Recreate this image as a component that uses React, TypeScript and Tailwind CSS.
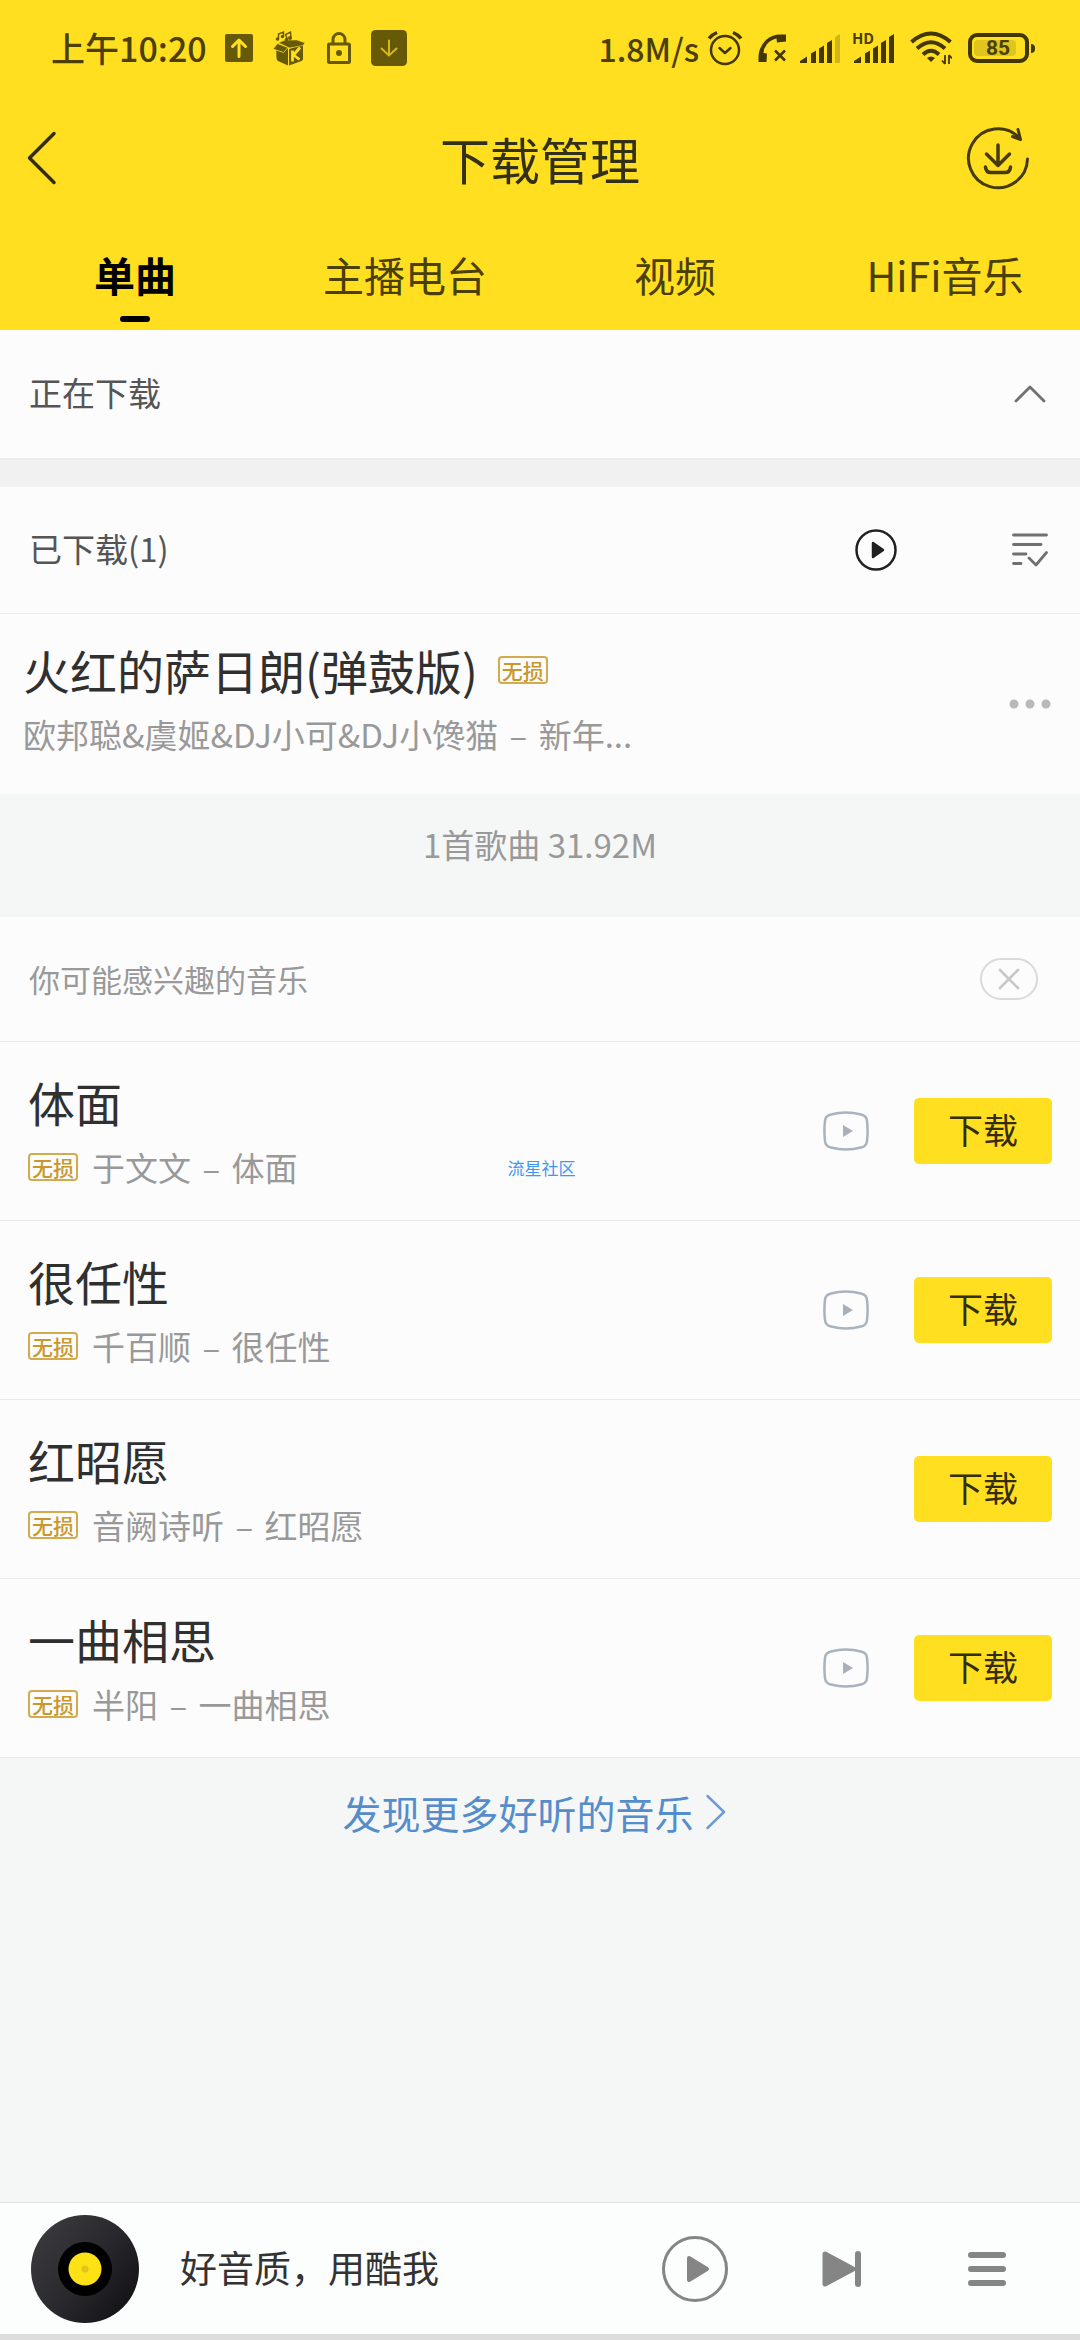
import React from "react";

type Song = { title: string; artist: string; album: string; hasVideo: boolean; mark?: string };

const songs: Song[] = [
  { title: "体面", artist: "于文文", album: "体面", hasVideo: true, mark: "流星社区" },
  { title: "很任性", artist: "千百顺", album: "很任性", hasVideo: true },
  { title: "红昭愿", artist: "音阙诗听", album: "红昭愿", hasVideo: false },
  { title: "一曲相思", artist: "半阳", album: "一曲相思", hasVideo: true },
];

const tabs = ["单曲", "主播电台", "视频", "HiFi音乐"];

function Lossless() {
  return (
    <span className="flex h-7 w-[50px] shrink-0 items-center justify-center rounded border-2 border-[#d3ab4e] text-[21px] leading-6 font-medium text-[#c9972b]">
      无损
    </span>
  );
}

function Credit({ artist, album }: { artist: string; album: string }) {
  return (
    <span>
      {artist} <span className="mx-1">–</span> {album}
    </span>
  );
}

function SignalBars({ faded }: { faded: boolean }) {
  return (
    <svg className="h-[29px] w-10" viewBox="0 0 40 29" fill="#433700" aria-hidden="true">
      <path d="M0 29v-2l7-4.500v6.500z" />
      <path d="M11 19.500l5-3V29h-5z" />
      <path d="M19 14.500l5-3V29h-5z" />
      <path d="M27 9l5-3V29h-5z" />
      <path d="M35 3l5-3V29h-5z" opacity={faded ? 0.25 : 1} />
    </svg>
  );
}

function StatusBar() {
  return (
    <div className="flex h-24 items-center justify-between pr-[45px] pl-[51px] text-[#4b3f02]">
      <div className="flex items-center">
        <span className="text-[34px] leading-10 font-medium">上午10:20</span>
        <svg className="ml-[18px] h-7 w-7" viewBox="0 0 28 28" aria-hidden="true">
          <rect width="28" height="28" rx="2" fill="#665908" />
          <path d="M14 22.500V6.500M7.500 12.500L14 6l6.500 6.500" fill="none" stroke="#ffe022" strokeWidth="3" strokeLinecap="round" strokeLinejoin="round" />
        </svg>
        <svg className="ml-[19px] h-9 w-[34px]" viewBox="0 0 34 36" aria-hidden="true">
          <path d="M4 15L16 18.500V35.500L6 31Q4.500 30 4.500 28z" fill="#665908" />
          <path d="M17 19L31 14.500V29Q31 30.500 29.500 31L17 35.500z" fill="#665908" />
          <path d="M1 19L5.500 13.500L16 17.500L11.500 22.500z" fill="#665908" stroke="#ffdf20" strokeWidth="0.8" />
          <path d="M6.500 12.800L13 10h12l8 2.800L31 15.500L17.500 18z" fill="#665908" stroke="#ffdf20" strokeWidth="0.6" />
          <path d="M20.500 20.500V31.500M28 17.500L21.500 25L27.500 29.500" fill="none" stroke="#ffdf20" strokeWidth="2.800" strokeLinejoin="round" />
          <path d="M6.500 9V4L11.500 2V6M15.500 9.500L13.500 4.500L18.500 2L19 8" fill="none" stroke="#665908" strokeWidth="1.400" />
          <circle cx="5.500" cy="9" r="1.800" fill="#665908" />
          <circle cx="10.500" cy="6.500" r="1.700" fill="#665908" />
          <circle cx="14.500" cy="9.500" r="1.700" fill="#665908" />
          <circle cx="18" cy="8" r="2" fill="#665908" />
        </svg>
        <svg className="ml-[21px] h-8 w-6" viewBox="0 0 24 32" fill="none" stroke="#665908" strokeWidth="3" aria-hidden="true">
          <rect x="1.500" y="12" width="21" height="18.500" rx="1" />
          <path d="M6 12V7.500a6 6 0 0 1 12 0V12" />
          <circle cx="12" cy="21" r="3" fill="#665908" stroke="none" />
        </svg>
        <svg className="ml-5 h-9 w-9" viewBox="0 0 36 36" aria-hidden="true">
          <rect width="36" height="36" rx="4.500" fill="#665908" />
          <path d="M18 10.500V25M10.500 18.500L18 25.500l7.500-7" fill="none" stroke="#d3b91b" strokeWidth="2" strokeLinecap="round" />
        </svg>
      </div>

      <div className="flex items-center">
        <span className="text-[32px] leading-10 font-medium">1.8M/s</span>
        <svg className="ml-2 h-9 w-9" viewBox="0 0 36 36" fill="none" stroke="#433700" strokeLinecap="round" aria-hidden="true">
          <circle cx="18" cy="20" r="14" strokeWidth="2.500" />
          <path d="M12.500 18L18 23l5.500-5" strokeWidth="2.500" strokeLinejoin="round" />
          <path d="M2 8.500Q5 4.500 10 2.500M34 8.500Q31 4.500 26 2.500" strokeWidth="3.500" strokeLinecap="butt" />
        </svg>
        <svg className="ml-[15px] h-7 w-7" viewBox="0 0 28 28" aria-hidden="true">
          <path d="M0.500 28V22Q1 13 8 6Q14 0.500 22 0.500H28V7.500L19 8.500L18.500 4.500Q13 5.500 9 10Q5.500 14.500 5.500 19L9 19.500L8.500 28z" fill="#433700" />
          <path d="M17 16.500L27 26.500M27 16.500L17 26.500" stroke="#433700" strokeWidth="2.600" />
        </svg>
        <div className="ml-[14px]">
          <SignalBars faded />
        </div>
        <div className="relative ml-[14px]">
          <SignalBars faded={false} />
          <span className="absolute -top-1 -left-0.5 text-[15px] leading-4 font-bold">HD</span>
        </div>
        <svg className="ml-4 h-[34px] w-[42px]" viewBox="0 0 42 34" fill="none" stroke="#433700" strokeWidth="4" aria-hidden="true">
          <path d="M1.500 11Q21-6 40.500 11" />
          <path d="M7 17.500Q21 5 35 17.500" />
          <path d="M13 23.500Q21 16 29 23.500" />
          <path d="M17 27Q21 24 25 27L21 31z" fill="#433700" stroke="none" />
          <path d="M35 24v9M39 33v-9M35 33l-3-3.500M39 24l3 3.500" strokeWidth="1.800" />
        </svg>
        <div className="ml-4 flex items-center gap-0.5">
          <span className="flex h-[30px] w-[61px] items-center rounded-[9px] border-4 border-[#433700] pl-0.5">
            <span className="flex h-4 w-[42px] items-center justify-end rounded-sm bg-[#e0c51c] pr-1.5 font-[Roboto,sans-serif] text-[21px] leading-4 font-bold">
              85
            </span>
          </span>
          <span className="h-[9px] w-1 rounded-r bg-[#433700]" />
        </div>
      </div>
    </div>
  );
}

function Header() {
  return (
    <header className="bg-[#ffdf20]">
      <StatusBar />
      <div className="grid h-32 grid-cols-[1fr_auto_1fr] items-center pb-1">
        <button type="button" aria-label="返回" className="ml-6 w-9">
          <svg className="h-[60px] w-9" viewBox="0 0 36 60" fill="none" stroke="#322b0c" strokeWidth="3.500" strokeLinecap="round" strokeLinejoin="round" aria-hidden="true">
            <path d="M30 5.500L5.500 30L30 54.500" />
          </svg>
        </button>
        <h1 className="text-[50px] leading-[60px] text-[#333018]">下载管理</h1>
        <button type="button" aria-label="下载设置" className="mr-[50px] justify-self-end">
          <svg className="h-16 w-16" viewBox="0 0 64 64" fill="none" stroke="#453a08" strokeWidth="3" strokeLinecap="round" strokeLinejoin="round" aria-hidden="true">
            <path d="M61.500 33A29.500 29.500 0 1 1 53 11.500" />
            <path d="M52 3.500L54.500 13.500L46.500 10.500" />
            <path d="M32 19V39M20.500 28L32 39.500L43.500 28" strokeWidth="3.500" />
            <path d="M19.500 41Q20 46.500 25 46.500H39Q44 46.500 44.500 41" strokeWidth="3.500" />
          </svg>
        </button>
      </div>
      <nav className="grid grid-cols-4">
        {tabs.map((tab, i) => (
          <button
            key={tab}
            type="button"
            aria-current={i === 0 ? "page" : undefined}
            className={
              i === 0
                ? "flex flex-col items-center pt-5 pb-2 text-[41px] leading-[60px] font-bold text-black"
                : "flex flex-col items-center pt-5 pb-2 text-[41px] leading-[60px] text-[#4b3f02]"
            }
          >
            {tab}
            <span className={i === 0 ? "mt-3 h-1.5 w-[30px] rounded-full bg-black" : "mt-3 h-1.5"} />
          </button>
        ))}
      </nav>
    </header>
  );
}

function SongRow({ song }: { song: Song }) {
  return (
    <li className="relative flex h-[179px] items-center border-b border-[#e9eaea] px-7">
      <div className="flex min-w-0 flex-1 flex-col gap-1">
        <h3 className="text-[47px] leading-[68px] text-[#303030]">{song.title}</h3>
        <p className="flex items-center gap-[14px] text-[33px] leading-[54px] text-[#999]">
          <Lossless />
          <Credit artist={song.artist} album={song.album} />
        </p>
      </div>
      {song.mark && (
        <span className="absolute top-[116px] left-[47%] text-[17px] leading-5 text-[#3f97f0]">{song.mark}</span>
      )}
      {song.hasVideo && (
        <button type="button" aria-label="播放视频" className="mr-[45px]">
          <svg className="h-10 w-[46px]" viewBox="0 0 46 40" fill="none" aria-hidden="true">
            <path d="M8 3.500Q23-0.500 38 3.500Q43.500 4.500 44 10Q45.200 20 44 30Q43.500 35.500 38 36.500Q23 40.500 8 36.500Q2.500 35.500 2 30Q0.800 20 2 10Q2.500 4.500 8 3.500z" stroke="#a9b3bf" strokeWidth="2.500" />
            <path d="M20 14L30 20L20 26z" fill="#a9b0ba" />
          </svg>
        </button>
      )}
      <button type="button" className="h-[66px] w-[138px] rounded-[5px] bg-[#ffdf20] pb-1 text-[35px] leading-[52px] text-[#332d0c]">
        下载
      </button>
    </li>
  );
}

function Player() {
  return (
    <footer className="border-t border-[#dfe2e1] bg-[#fcfdfd]">
      <div className="flex h-[131px] items-center pr-[74px] pl-[31px]">
        <svg className="h-[108px] w-[108px]" viewBox="0 0 108 108" aria-hidden="true">
          <defs>
            <linearGradient id="disc" x1="0.100" y1="0.200" x2="0.900" y2="0.800">
              <stop offset="0" stopColor="#38373c" />
              <stop offset="0.500" stopColor="#2a292e" />
              <stop offset="1" stopColor="#151417" />
            </linearGradient>
          </defs>
          <circle cx="54" cy="54" r="54" fill="url(#disc)" />
          <circle cx="54" cy="54" r="27" fill="#000" />
          <circle cx="54" cy="54" r="16.500" fill="#ffe216" />
          <circle cx="54" cy="54" r="3.500" fill="#e3c518" />
        </svg>
        <span className="ml-[41px] flex-1 pb-1 text-[37px] leading-[54px] text-[#333]">好音质，用酷我</span>
        <button type="button" aria-label="播放" className="mr-[94px]">
          <svg className="h-[66px] w-[66px]" viewBox="0 0 66 66" aria-hidden="true">
            <circle cx="33" cy="33" r="31.500" fill="none" stroke="#848584" strokeWidth="3" />
            <path d="M27 22L45 33L27 44z" fill="#848584" stroke="#848584" strokeWidth="4" strokeLinejoin="round" />
          </svg>
        </button>
        <button type="button" aria-label="下一首" className="mr-[107px]">
          <svg className="h-9 w-[39px]" viewBox="0 0 39 36" fill="#848584" aria-hidden="true">
            <path d="M3 3L31 18L3 33z" stroke="#848584" strokeWidth="5" strokeLinejoin="round" />
            <rect x="33" width="6" height="36" rx="3" />
          </svg>
        </button>
        <button type="button" aria-label="播放列表">
          <svg className="h-9 w-[38px]" viewBox="0 0 38 36" fill="#848584" aria-hidden="true">
            <rect y="1" width="38" height="6" rx="3" />
            <rect y="15" width="38" height="6" rx="3" />
            <rect y="29" width="38" height="6" rx="3" />
          </svg>
        </button>
      </div>
      <div className="h-1.5 bg-[#dcdddc]" />
    </footer>
  );
}

export default function App() {
  return (
    <div className="flex min-h-screen flex-col bg-[#f5f7f7] font-['Noto_Sans_CJK_SC',sans-serif]">
      <Header />
      <main className="flex-1">
        <button type="button" className="flex h-32 w-full items-center justify-between bg-[#fcfcfc] pr-[34px] pl-[29px]">
          <span className="pb-1 text-[33px] leading-[50px] text-[#555]">正在下载</span>
          <svg className="h-5 w-8" viewBox="0 0 32 20" fill="none" stroke="#707070" strokeWidth="2.800" strokeLinecap="round" strokeLinejoin="round" aria-hidden="true">
            <path d="M2 17L16 3L30 17" />
          </svg>
        </button>

        <div className="h-[29px] border-t-2 border-[#ececec] bg-[#f1f1f1]" />

        <section className="bg-[#fcfcfc]">
          <div className="flex h-[127px] items-center border-b border-[#ececec] pr-8 pl-[29px]">
            <h2 className="flex-1 pb-1 text-[33px] leading-[50px] text-[#555]">已下载(1)</h2>
            <button type="button" aria-label="播放全部" className="mr-[115px]">
              <svg className="h-[42px] w-[42px]" viewBox="0 0 42 42" aria-hidden="true">
                <circle cx="21" cy="21" r="19.500" fill="none" stroke="#202020" strokeWidth="2.500" />
                <path d="M18 14L28 21L18 28z" fill="#202020" stroke="#202020" strokeWidth="2.500" strokeLinejoin="round" />
              </svg>
            </button>
            <button type="button" aria-label="批量管理">
              <svg className="h-9 w-9" viewBox="0 0 36 36" fill="none" stroke="#707070" strokeWidth="2.800" strokeLinecap="round" strokeLinejoin="round" aria-hidden="true">
                <path d="M1.500 3H34.500M1.500 12.500H29M1.500 22H14M1.500 31.500H9" />
                <path d="M17 26L24 33L34.500 20.500" />
              </svg>
            </button>
          </div>
          <div className="flex h-[180px] items-center pr-7 pl-[23px]">
            <div className="min-w-0 flex-1 pb-2">
              <h3 className="flex items-center gap-5 text-[47px] leading-[68px] text-[#303030]">
                火红的萨日朗(弹鼓版)
                <Lossless />
              </h3>
              <p className="text-[33px] leading-[60px] text-[#999]">
                <Credit artist="欧邦聪&虞姬&DJ小可&DJ小馋猫" album="新年..." />
              </p>
            </div>
            <button type="button" aria-label="更多">
              <svg className="h-3 w-11" viewBox="0 0 44 12" fill="#b9b9b9" aria-hidden="true">
                <circle cx="6" cy="6" r="4.500" />
                <circle cx="22" cy="6" r="4.500" />
                <circle cx="38" cy="6" r="4.500" />
              </svg>
            </button>
          </div>
        </section>

        <p className="h-[123px] pt-[26px] text-center text-[33px] leading-[48px] text-[#999]">1首歌曲 31.92M</p>

        <section className="bg-[#fcfcfc]">
          <div className="flex h-[125px] items-center justify-between border-b border-[#e9eaea] pr-[42px] pl-[29px]">
            <h2 className="text-[31px] leading-[48px] text-[#999]">你可能感兴趣的音乐</h2>
            <button type="button" aria-label="关闭" className="flex h-[42px] w-[58px] items-center justify-center rounded-full border-2 border-[#dadada]">
              <svg className="h-[22px] w-[22px]" viewBox="0 0 22 22" stroke="#c8c8c8" strokeWidth="2.600" strokeLinecap="round" aria-hidden="true">
                <path d="M2 2L20 20M20 2L2 20" />
              </svg>
            </button>
          </div>
          <ul>
            {songs.map((song) => (
              <SongRow key={song.title} song={song} />
            ))}
          </ul>
        </section>

        <a href="#discover" className="flex items-center justify-center gap-3 pt-6 pr-3 text-[39px] leading-[60px] text-[#558dcb]">
          发现更多好听的音乐
          <svg className="h-9 w-5" viewBox="0 0 20 36" fill="none" stroke="#6f9dd2" strokeWidth="2.500" strokeLinecap="round" strokeLinejoin="round" aria-hidden="true">
            <path d="M1.500 2L18 18L1.500 34" />
          </svg>
        </a>
      </main>
      <Player />
    </div>
  );
}
